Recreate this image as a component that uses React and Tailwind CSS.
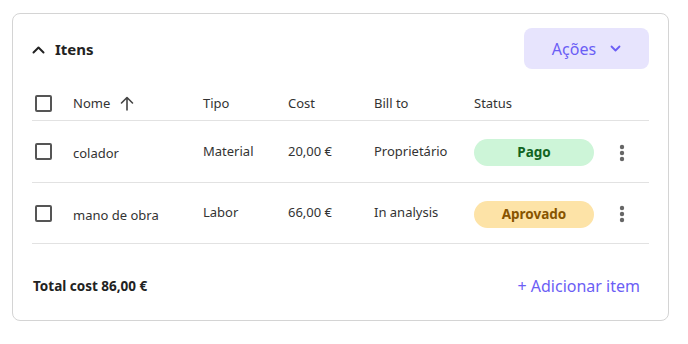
import React from "react";

const Check = () => (
  <div className="w-[17px] h-[17px] border-2 border-[#555] rounded-[2px]" />
);

const Kebab = () => (
  <svg width="6" height="18" viewBox="0 0 6 18">
    <circle cx="3" cy="3" r="2.2" fill="#666" />
    <circle cx="3" cy="9" r="2.2" fill="#666" />
    <circle cx="3" cy="15" r="2.2" fill="#666" />
  </svg>
);

const rows = [
  { name: "colador", tipo: "Material", cost: "20,00 €", bill: "Proprietário", status: "Pago", pill: "bg-[#cdf5d8] text-[#12641f]", h: "h-[62px]" },
  { name: "mano de obra", tipo: "Labor", cost: "66,00 €", bill: "In analysis", status: "Aprovado", pill: "bg-[#fde3a7] text-[#875400]", h: "h-[61px]" },
];

const cols = "grid grid-cols-[41px_130px_85px_86px_100px_132px_1fr] items-center";

export default function App() {
  return (
    <div className="w-[688px] h-[344px] bg-white pt-[13px] pl-[12px]" style={{ fontFamily: '"Noto Sans", "Open Sans", sans-serif' }}>
      <div className="w-[657px] h-[308px] border border-[#d4d4d4] rounded-[8px] pt-[14px] pl-[19px] pr-[19px] flex flex-col">
        <div className="flex items-center justify-between">
          <div className="flex items-center gap-[10px] pt-[1px]">
            <svg width="13" height="9" viewBox="0 0 13 9" fill="none">
              <path d="M1.5 7.5 L6.5 2.5 L11.5 7.5" stroke="#222" strokeWidth="2" strokeLinecap="round" strokeLinejoin="round" />
            </svg>
            <span className="text-[15px] font-bold text-[#222]">Itens</span>
          </div>
          <button className="w-[125px] h-[41px] rounded-[8px] bg-[#e7e4fd] flex items-center justify-center gap-[14px] text-[#6b5ef5] text-[16px]">
            <span>Ações</span>
            <svg width="11" height="7" viewBox="0 0 11 7" fill="none">
              <path d="M1.5 1.5 L5.5 5.5 L9.5 1.5" stroke="#6b5ef5" strokeWidth="1.8" strokeLinecap="round" strokeLinejoin="round" />
            </svg>
          </button>
        </div>

        <div className={`${cols} h-[37px] mt-[15px] pt-[3px] border-b border-[#e2e2e2] text-[13px] text-[#333]`}>
          <div className="pl-[3px]"><Check /></div>
          <div className="flex items-center gap-[10px]">
            <span>Nome</span>
            <svg width="14" height="15" viewBox="0 0 14 15" fill="none">
              <path d="M7 14 V2 M1.5 7 L7 1.5 L12.5 7" stroke="#444" strokeWidth="1.6" strokeLinecap="round" strokeLinejoin="round" />
            </svg>
          </div>
          <div>Tipo</div>
          <div>Cost</div>
          <div>Bill to</div>
          <div>Status</div>
          <div />
        </div>

        {rows.map((r) => (
          <div key={r.name} className={`${cols} ${r.h} border-b border-[#e2e2e2] text-[13px] text-[#333]`}>
            <div className="pl-[3px]"><Check /></div>
            <div className="pt-[5px]">{r.name}</div>
            <div>{r.tipo}</div>
            <div>{r.cost}</div>
            <div>{r.bill}</div>
            <div className="pt-[2px]">
              <div className={`w-[120px] h-[27px] rounded-full flex items-center justify-center text-[13.5px] font-bold ${r.pill}`}>{r.status}</div>
            </div>
            <div className="pl-[13px] pt-[2px] flex items-center"><Kebab /></div>
          </div>
        ))}

        <div className="flex items-center justify-between mt-[30px] pr-[9px]">
          <span className="text-[13.5px] font-bold text-[#222] pl-[1px]">Total cost 86,00 €</span>
          <span className="text-[16px] text-[#6b5ef5]">+ Adicionar item</span>
        </div>
      </div>
    </div>
  );
}
